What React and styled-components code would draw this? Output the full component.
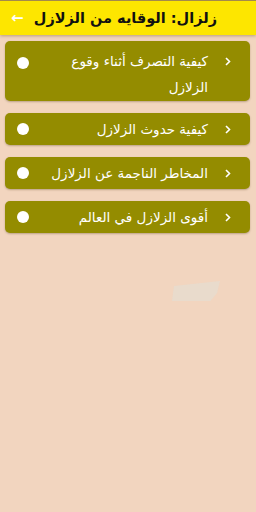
import React from "react";
import styled, { createGlobalStyle } from "styled-components";

const Global = createGlobalStyle`
  html, body {
    margin: 0;
    padding: 0;
    background: #f2d5bf;
  }
  body {
    font-family: "DejaVu Sans", "Noto Sans", sans-serif;
  }
`;

const Page = styled.div`
  width: 256px;
  height: 512px;
  background: #f2d5bf;
  display: flex;
  flex-direction: column;
`;

const Header = styled.header`
  height: 35px;
  background: #fde600;
  border-top: 1px solid #a48a4a;
  box-shadow: 0 1px 3px rgba(120, 90, 40, 0.45);
  display: flex;
  align-items: center;
  justify-content: space-between;
  padding: 0 39px 0 11px;
  box-sizing: border-box;
`;

const Back = styled.span`
  color: #ffffff;
  font-size: 15px;
  font-weight: bold;
  line-height: 1;
`;

const Title = styled.h1`
  margin: 0;
  direction: rtl;
  white-space: nowrap;
  font-size: 14.5px;
  font-weight: bold;
  color: #111;
`;

const List = styled.div`
  display: flex;
  flex-direction: column;
  gap: 12px;
  padding: 6px 6px 0 5px;
`;

const Card = styled.div`
  background: #948c00;
  border-radius: 5px;
  box-shadow: 0 1px 2px rgba(90, 70, 30, 0.35);
  display: flex;
  direction: rtl;
  align-items: ${(p) => (p.$tall ? "flex-start" : "center")};
  min-height: ${(p) => (p.$tall ? "60px" : "32px")};
  padding: ${(p) => (p.$tall ? "7px 19px 0 12px" : "0 19px 0 12px")};
  box-sizing: border-box;
`;

const Chevron = styled.svg`
  width: 6px;
  height: 9px;
  flex-shrink: 0;
  margin-top: ${(p) => (p.$tall ? "9px" : "0")};
`;

const Label = styled.span`
  flex: 1;
  color: #fff;
  font-size: 13.5px;
  line-height: ${(p) => (p.$tall ? "26px" : "25px")};
  padding-right: 17px;
  white-space: pre-line;
`;

const Dot = styled.span`
  width: 12px;
  height: 12px;
  border-radius: 50%;
  background: #fff;
  flex-shrink: 0;
  margin-top: ${(p) => (p.$tall ? "9px" : "0")};
`;

const Smudge = styled.div`
  width: 48px;
  height: 20px;
  margin: 48px 0 0 172px;
  background: #e6dccf;
  opacity: 0.8;
  clip-path: polygon(4% 25%, 100% 0%, 94% 60%, 80% 100%, 0% 100%);
`;

const items = [
  { text: "كيفية التصرف أثناء وقوع\nالزلازل", tall: true },
  { text: "كيفية حدوث الزلازل" },
  { text: "المخاطر الناجمة عن الزلازل" },
  { text: "أقوى الزلازل في العالم" },
];

export default function App() {
  return (
    <Page>
      <Global />
      <Header>
        <Back>←</Back>
        <Title>زلزال: الوقايه من الزلازل</Title>
      </Header>
      <List>
        {items.map((it) => (
          <Card key={it.text} $tall={it.tall}>
            <Chevron $tall={it.tall} viewBox="0 0 6 9">
              <path d="M1 1l3.5 3.5L1 8" fill="none" stroke="#fff" strokeWidth="1.6" />
            </Chevron>
            <Label $tall={it.tall}>{it.text}</Label>
            <Dot $tall={it.tall} />
          </Card>
        ))}
      </List>
      <Smudge />
    </Page>
  );
}
